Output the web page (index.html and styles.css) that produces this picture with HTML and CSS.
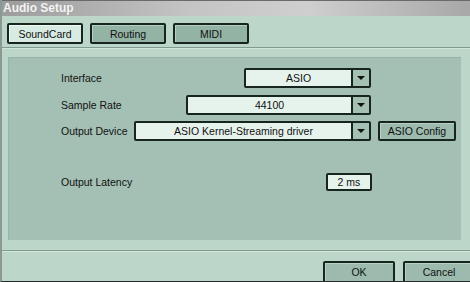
FILE: index.html
```html
<!DOCTYPE html>
<html lang="en">
<head>
  <meta charset="UTF-8">
  <title>Audio Setup</title>
  <link rel="stylesheet" href="styles.css">
</head>
<body>

  <div class="window">
    <div class="titlebar">Audio Setup</div>

    <div class="tabs">
      <button class="tab active">SoundCard</button>
      <button class="tab">Routing</button>
      <button class="tab">MIDI</button>
    </div>
    <div class="sep"></div>

    <div class="panel">
      <div class="row row-interface">
        <span class="label">Interface</span>
        <div class="select w-interface">
          <span class="value">ASIO</span>
          <span class="arrow"></span>
        </div>
        <div class="side"></div>
      </div>

      <div class="row row-rate">
        <span class="label">Sample Rate</span>
        <div class="select w-rate">
          <span class="value">44100</span>
          <span class="arrow"></span>
        </div>
        <div class="side"></div>
      </div>

      <div class="row row-device">
        <span class="label">Output Device</span>
        <div class="select w-device">
          <span class="value">ASIO Kernel-Streaming driver</span>
          <span class="arrow"></span>
        </div>
        <div class="side">
          <button class="btn config">ASIO Config</button>
        </div>
      </div>

      <div class="row row-latency">
        <span class="label">Output Latency</span>
        <div class="field">2 ms</div>
        <div class="side"></div>
      </div>
    </div>

    <div class="sep bottom"></div>

    <div class="footer">
      <button class="btn action">OK</button>
      <button class="btn action">Cancel</button>
    </div>
  </div>

</body>
</html>
```

FILE: styles.css
```css
html, body {
  margin: 0;
  padding: 0;
}

body {
  font-family: "Liberation Sans", Arial, sans-serif;
  font-size: 10.5px;
  color: #111;
  background-color: #bcd6c9;
}

.window {
  width: 470px;
  height: 282px;
  box-sizing: border-box;
  border-left: 2px solid #8a9a92;
  border-bottom: 1px solid #2a2a2a;
  background-color: #bcd6c9;
  display: flex;
  flex-direction: column;
  overflow: hidden;
}

.window > * {
  flex-shrink: 0;
}

.titlebar {
  height: 15px;
  line-height: 15px;
  border-top: 1px solid #6a6a6a;
  padding-left: 1px;
  font-size: 12px;
  font-weight: bold;
  color: #f4f4f4;
  text-shadow: 0 0 1px #9a9a9a;
  background: linear-gradient(90deg, #9c9c9c 0%, #c4c4c4 40%, #cfcfcf 65%, #a8a8a8 100%);
}

.tabs {
  display: flex;
  gap: 7px;
  padding: 7px 0 0 5px;
  height: 21px;
}

button {
  font-family: "Liberation Sans", Arial, sans-serif;
  font-size: 10.5px;
  color: #111;
  padding: 0;
  margin: 0;
}

.tab {
  width: 76px;
  height: 21px;
  border: 2px solid #16261e;
  border-radius: 2px;
  background-color: #93b3a5;
  box-shadow: inset 1px 1px 0 #b5cec3;
}

.tab.active {
  background-color: #d8ebe2;
  box-shadow: inset 1px 1px 0 #f0f8f4;
}

.sep {
  margin-top: 3px;
  height: 1px;
  background-color: #7f9a8e;
  border-bottom: 1px solid #d2e5db;
}

.panel {
  margin: 8px 9px 0 6px;
  height: 183px;
  box-sizing: border-box;
  padding: 10px 5px 0 52px;
  background-color: #a4c0b4;
  border-top: 1px solid #98b4a8;
  border-left: 1px solid #98b4a8;
}

.row {
  display: flex;
  align-items: center;
  height: 20px;
}

.row-rate {
  margin-top: 7px;
}

.row-device {
  margin-top: 6px;
}

.row-latency {
  margin-top: 32px;
  height: 18px;
}

.label {
  white-space: nowrap;
}

.select {
  margin-left: auto;
  height: 20px;
  box-sizing: border-box;
  border: 2px solid #16261e;
  border-radius: 2px;
  background-color: #e6f2ec;
  display: flex;
}

.w-interface { width: 127px; }
.w-rate { width: 185px; }
.w-device { width: 237px; }

.value {
  flex: 1;
  text-align: center;
  line-height: 16px;
  white-space: nowrap;
}

.arrow {
  width: 16px;
  border-left: 2px solid #16261e;
  background-color: #a3c0b3;
  position: relative;
}

.arrow::after {
  content: "";
  position: absolute;
  left: 4px;
  top: 6px;
  border-left: 4px solid transparent;
  border-right: 4px solid transparent;
  border-top: 4px solid #111;
}

.side {
  width: 85px;
  display: flex;
  justify-content: flex-end;
}

.btn {
  height: 20px;
  border: 2px solid #16261e;
  border-radius: 2px;
  background-color: #9cbaad;
  box-shadow: inset 1px 1px 0 #b8d0c5;
}

.config {
  width: 78px;
}

.field {
  margin-left: auto;
  margin-right: -1px;
  width: 46px;
  height: 18px;
  box-sizing: border-box;
  border: 2px solid #16261e;
  border-radius: 2px;
  background-color: #e6f2ec;
  text-align: center;
  line-height: 14px;
}

.sep.bottom {
  margin-top: 10px;
}

.footer {
  display: flex;
  justify-content: flex-end;
  gap: 8px;
  padding-top: 9px;
  margin-right: -5px;
}

.action {
  width: 72px;
  height: 24px;
  padding-bottom: 2px;
}
```
